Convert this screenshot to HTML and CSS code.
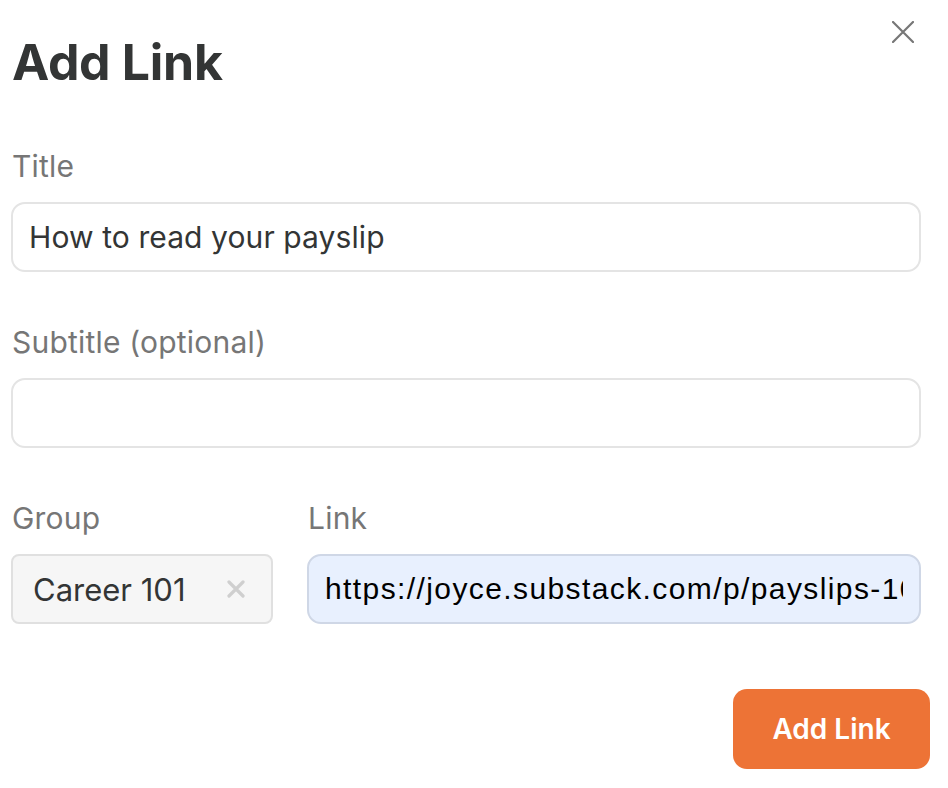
FILE: index.html
```html
<!DOCTYPE html>
<html>
<head>
<meta charset="utf-8">
<link rel="stylesheet" href="styles.css">
</head>
<body>
<div class="dialog">
  <div class="header">
    <h1 class="heading">Add Link</h1>
    <button class="close" aria-label="Close">
      <svg width="22" height="22" viewBox="0 0 22 22"><path d="M1 1 L21 21 M21 1 L1 21" stroke="#777" stroke-width="2.2" stroke-linecap="round" fill="none"/></svg>
    </button>
  </div>
  <div class="field">
    <label class="label">Title</label>
    <input class="input" type="text" value="How to read your payslip">
  </div>
  <div class="field">
    <label class="label">Subtitle (optional)</label>
    <input class="input" type="text" value="">
  </div>
  <div class="row">
    <div class="col group-field">
      <label class="label">Group</label>
      <div class="select">
        <span class="select-value">Career 101</span>
        <svg class="clear" width="18" height="18" viewBox="0 0 18 18"><path d="M2 2 L16 16 M16 2 L2 16" stroke="#cfcfcf" stroke-width="3.2" stroke-linecap="round" fill="none"/></svg>
      </div>
    </div>
    <div class="col link-field">
      <label class="label">Link</label>
      <input class="input autofill" type="text" value="https://joyce.substack.com/p/payslips-101">
    </div>
  </div>
  <div class="actions">
    <button class="primary">Add Link</button>
  </div>
</div>
</body>
</html>
```
FILE: styles.css
```css
* { box-sizing: border-box; }
html, body { margin: 0; padding: 0; background: #fff; }
body { font-family: Inter, "Noto Sans", sans-serif; color: #333535; }
.dialog { width: 948px; padding: 0 18px 0 11px; }
.header { display: flex; justify-content: space-between; align-items: flex-start; padding-top: 31px; }
.heading { margin: 0 0 0 1px; font-size: 50px; line-height: 62px; font-weight: 700; color: #333535; letter-spacing: -0.3px; }
.close { border: 0; background: none; padding: 0; margin: -10px 16px 0 0; width: 22px; height: 22px; cursor: pointer; }
.close svg { display: block; }
.field, .col { display: flex; flex-direction: column; }
.field { width: 910px; }
.header + .field { margin-top: 55px; }
.field + .field, .field + .row { margin-top: 52px; }
.label { font-size: 30px; line-height: 36px; color: #767676; margin: 0 0 18px 1px; letter-spacing: 0.2px; }
.input { width: 100%; height: 70px; border: 2px solid #e4e4e4; border-radius: 14px; padding: 0 16px; font-family: Inter, "Noto Sans", sans-serif; font-size: 30px; color: #333535; background: #fff; outline: none; letter-spacing: 0.1px; }
.row { display: flex; gap: 34px; width: 910px; }
.group-field { width: 262px; }
.link-field { flex: 1; }
.select { height: 70px; border: 2px solid #e0e0e0; border-radius: 8px; background: #f6f6f6; display: flex; align-items: center; justify-content: space-between; padding: 0 26px 0 20px; }
.select-value { font-size: 31px; color: #333535; }
.clear { display: block; }
.autofill { background: #e8f0fe; border-color: #cfd7e6; color: #000; font-family: "Liberation Sans", Arial, sans-serif; font-size: 30px; letter-spacing: 1.4px; padding-left: 16px; }
.actions { display: flex; justify-content: flex-end; margin-top: 65px; width: 919px; }
.primary { width: 197px; height: 80px; border: 0; border-radius: 14px; background: #ed7336; color: #fff; font-family: Inter, "Noto Sans", sans-serif; font-size: 28px; font-weight: 600; cursor: pointer; }
```
